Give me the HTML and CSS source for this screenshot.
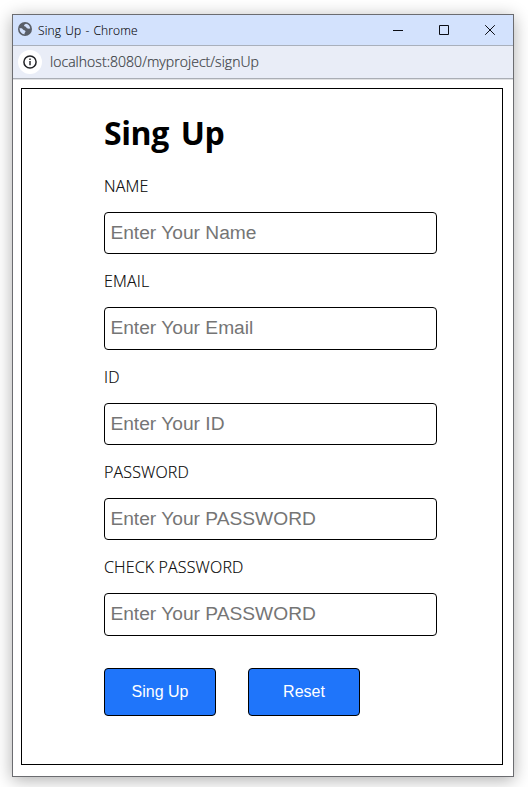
FILE: index.html
```html
<!DOCTYPE html>
<html lang="en">
<head>
<meta charset="utf-8">
<title>Sing Up</title>
<link rel="stylesheet" href="styles.css">
</head>
<body>
<div class="window">
  <header class="titlebar">
    <svg class="globe" width="14" height="14" viewBox="0 0 14 14"><circle cx="7" cy="7" r="7" fill="#5a5f68"/><path d="M1.6 6.1C3 6.3 4.4 6.3 5 7.4C5.6 8.6 7.4 7.9 7.5 9.2C7.6 10.2 6.4 10.4 6.4 12.4C3.5 12.2 1.4 9.5 1.6 6.1ZM8 1.7C6.5 2.3 5.9 2.8 6.1 3.8C6.3 4.7 8 4.2 8.2 5.3C8.4 6.5 9.8 6.8 12.2 6.6C12 4 10.4 2.1 8 1.7Z" fill="#d3e1fc"/></svg>
    <span class="title">Sing Up - Chrome</span>
    <div class="controls">
      <svg width="10" height="10" viewBox="0 0 10 10"><path d="M0 5.5H10"/></svg>
      <svg width="10" height="10" viewBox="0 0 10 10"><path d="M.5 .5H9.5V9.5H.5Z"/></svg>
      <svg width="10" height="10" viewBox="0 0 10 10"><path d="M.2 .2L9.8 9.8M9.8 .2L.2 9.8"/></svg>
    </div>
  </header>
  <div class="address">
    <span class="info"><svg width="14" height="14" viewBox="0 0 14 14"><circle cx="7" cy="7" r="6.1" fill="none" stroke="#202124" stroke-width="1.5"/><path d="M6.3 3.6H7.7V5H6.3ZM6.3 6.1H7.7V10.3H6.3Z" fill="#202124"/></svg></span>
    <span class="url">localhost:8080/myproject/signUp</span>
  </div>
  <main class="page">
    <form class="form">
      <h1>Sing Up</h1>
      <div class="field"><label for="name">NAME</label><input id="name" type="text" placeholder="Enter Your Name"></div>
      <div class="field"><label for="email">EMAIL</label><input id="email" type="text" placeholder="Enter Your Email"></div>
      <div class="field"><label for="uid">ID</label><input id="uid" type="text" placeholder="Enter Your ID"></div>
      <div class="field"><label for="pw">PASSWORD</label><input id="pw" type="password" placeholder="Enter Your PASSWORD"></div>
      <div class="field"><label for="pw2">CHECK PASSWORD</label><input id="pw2" type="password" placeholder="Enter Your PASSWORD"></div>
      <div class="actions"><button type="button">Sing Up</button><button type="reset">Reset</button></div>
    </form>
  </main>
</div>
</body>
</html>
```
FILE: styles.css
```css
* { box-sizing: border-box; }
body {
  margin: 0;
  padding: 14px 0 0 12px;
  height: 787px;
  overflow: hidden;
  background: #fff;
  font-family: "Open Sans", "Noto Sans", sans-serif;
}
.window {
  width: 502px;
  height: 763px;
  display: flex;
  flex-direction: column;
  border: 1px solid #6b6c70;
  background: #fff;
  box-shadow: 0 3px 16px rgba(0, 0, 0, .32);
}
.titlebar {
  height: 31px;
  flex: none;
  display: flex;
  align-items: center;
  padding: 0 18px 0 5px;
  background: #d3e2fd;
  border-bottom: 1px solid #a9b0bc;
}
.globe { margin-bottom: 2px; }
.title {
  margin: 2px 0 0 6px;
  font-size: 12px;
  line-height: 16px;
  font-weight: 300;
  color: #000;
  -webkit-text-stroke: .1px #000;
  letter-spacing: .1px;
  word-spacing: 1px;
  white-space: nowrap;
}
.controls { margin-left: auto; display: flex; gap: 36px; }
.controls svg { fill: none; stroke: #0b0d14; stroke-width: 1; }
.address {
  height: 33px;
  flex: none;
  display: flex;
  align-items: center;
  padding-left: 5px;
  background: #e9edf7;
  border-bottom: 1px solid #aaaeb5;
  box-shadow: 0 1px 0 #e0e1e3;
}
.info {
  width: 24px;
  height: 24px;
  display: flex;
  align-items: center;
  justify-content: center;
  border-radius: 50%;
  background: #fff;
}
.url {
  margin-left: 8px;
  font-size: 14px;
  line-height: 20px;
  color: #3c3f45;
  font-weight: 300;
  letter-spacing: .04px;
  -webkit-text-stroke: .2px #3c3f45;
}
.page {
  flex: 1;
  margin: 9px 10px 11px 8px;
  border: 1px solid #000;
}
.form { width: 333px; margin-left: 82px; padding-top: 22px; }
h1 {
  margin: 0 0 22px;
  font-size: 32px;
  line-height: 43px;
  font-weight: 700;
  letter-spacing: -.4px;
  word-spacing: 4px;
}
.field { height: 95.3px; }
label {
  display: block;
  width: max-content;
  font-size: 16px;
  line-height: 21px;
  font-weight: 300;
  letter-spacing: .15px;
  color: #000;
  -webkit-text-stroke: .15px #000;
}
input {
  display: block;
  width: 333px;
  height: 42.4px;
  margin: 15px 0 0;
  padding: 0 5.4px;
  border: 1px solid #000;
  border-radius: 4px;
  background: #fff;
  font: 19.2px "Liberation Sans", Arial, sans-serif;
}
input::placeholder { color: #757575; opacity: 1; }
.actions { display: flex; gap: 32px; padding-top: 16px; }
button {
  width: 112px;
  height: 48px;
  padding: 0;
  border: 1px solid #000;
  border-radius: 4px;
  background: #1f75fa;
  color: #fff;
  font: 16px "Liberation Sans", Arial, sans-serif;
}
```
